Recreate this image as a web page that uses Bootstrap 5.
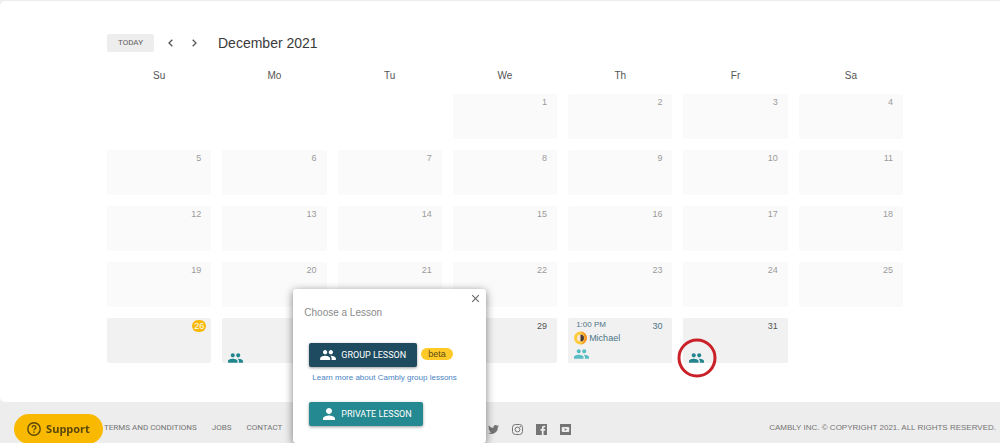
<!DOCTYPE html>
<html lang="en">
<head>
<meta charset="utf-8">
<meta name="viewport" content="width=device-width, initial-scale=1">
<title>Cambly – Lesson calendar</title>
<link href="https://cdn.jsdelivr.net/npm/bootstrap@5.3.0/dist/css/bootstrap.min.css" rel="stylesheet">
<script src="https://cdn.jsdelivr.net/npm/bootstrap@5.3.0/dist/js/bootstrap.bundle.min.js" defer></script>
<style>
  body { font-family: "Liberation Sans", Arial, sans-serif; background: #ededed; color: #424242; font-size: 9px; line-height: 12px; overflow-x: hidden; }
  .panel { margin-top: 1px; background: #fff; border-radius: 5px 0 0 5px; padding: 33px 97px 28px 107px; }
  .btn-today { --bs-btn-font-size: 8px; --bs-btn-padding-y: 0; --bs-btn-padding-x: 10px; --bs-btn-bg: #ededed; --bs-btn-color: #616161; --bs-btn-border-color: #ededed; --bs-btn-border-radius: 2px; height: 18px; line-height: 16px; font-family: Roboto, sans-serif; }
  .btn-step { --bs-btn-padding-x: 0; --bs-btn-padding-y: 0; width: 24px; height: 18px; line-height: 1; color: #555; }
  .month-title { font-size: 14px; line-height: 18px; font-weight: 400; color: #3a3a3a; }
  .calendar { width: calc(100% + 22px); margin: 6px -11px 0; table-layout: fixed; border-collapse: separate; border-spacing: 11px; }
  .calendar th { font-size: 10px; line-height: 14px; font-weight: 400; text-align: center; padding: 0; color: #555; }
  .calendar td { height: 45px; padding: 0; border-radius: 2px; background: #fafafa; color: #9a9a9a; vertical-align: top; position: relative; }
  .calendar td.blank { background: none; }
  .calendar td.open { background: #f1f1f1; color: #555; }
  .day-num { display: block; text-align: right; padding: 2px 10px 0 0; }
  .open .day-num.booked { color: #4c7485; }
  .today-dot { display: block; width: 14px; height: 12px; border-radius: 6px; margin: 2px 5px 0 auto; background: #f8b90a; color: #fff; text-align: center; }
  .group-mark { position: absolute; left: 6px; bottom: 0; line-height: 0; color: #22868f; }
  .event { position: absolute; left: 6px; top: 1px; color: #4c7485; }
  .event-time { font-size: 8px; margin-left: 2px; }
  .event-face { margin-right: 2px; }
  .ring { position: absolute; left: 50%; top: 50%; width: 39px; height: 39px; border: 3px solid #ca2027; border-radius: 50%; transform: translate(-50%, -50%); }
  .lesson-menu { position: absolute; z-index: 10; left: 71px; top: -29px; width: 193px; height: 154px; background: #fff; border-radius: 3px; box-shadow: 0 2px 8px rgba(0,0,0,.5); padding: 17px 11px 0; color: #8a8a8a; }
  .lesson-menu h2 { font-size: 10px; line-height: 14px; margin: 0 0 23px; font-weight: 400; }
  .lesson-row { margin-left: 5px; }
  .menu-close { position: absolute; top: 5px; right: 6px; border: 0; background: none; padding: 0; line-height: 0; color: #666; }
  .btn-lesson { --bs-btn-font-size: 9px; --bs-btn-padding-y: 0; --bs-btn-padding-x: 11px; --bs-btn-color: #fff; --bs-btn-hover-color: #fff; --bs-btn-border-width: 0; --bs-btn-border-radius: 2px; height: 24px; line-height: 24px; font-family: Roboto, sans-serif; box-shadow: 0 1px 3px rgba(0,0,0,.4); }
  .btn-group-lesson { --bs-btn-bg: #1e4b5f; --bs-btn-hover-bg: #1e4b5f; }
  .btn-private-lesson { --bs-btn-bg: #248990; --bs-btn-hover-bg: #248990; margin-top: 18px; }
  .icon-slot { width: 17px; }
  .beta-tag { background: #ffca28; color: #5d4b16; border-radius: 6px; padding: 0 7px; margin-bottom: 2px; }
  .learn-more { color: #4a84c4; font-size: 8px; text-decoration: none; }
  .site-footer { height: 41px; padding: 20px 4px 0 104px; font: 8px/12px Roboto, sans-serif; color: #757575; }
  .site-footer a { color: inherit; text-decoration: none; }
  .footer-links { flex: 0 0 43%; column-gap: 15px; }
  .social { column-gap: 13px; }
  .social svg { display: block; color: #757575; margin-top: 2px; }
  .copyright { font-family: "Liberation Sans", Arial, sans-serif; }
  .support { position: fixed; left: 14px; bottom: -1px; height: 30px; width: 89px; border: 0; border-radius: 15px; background: #f8b900; color: #5a470a; font: bold 11px/30px "Open Sans", sans-serif; z-index: 5; padding: 0; }
</style>
</head>
<body>
<svg class="d-none" aria-hidden="true">
  <symbol id="people" viewBox="1 5 22 14"><path fill="currentColor" d="M16 11c1.660 0 2.990-1.340 2.990-3S17.660 5 16 5s-3 1.340-3 3 1.340 3 3 3zm-8 0c1.660 0 2.990-1.340 2.990-3S9.660 5 8 5 5 6.340 5 8s1.340 3 3 3zm0 2c-2.330 0-7 1.170-7 3.500V19h14v-2.500c0-2.330-4.670-3.500-7-3.500zm8 0c-.29 0-.62.02-.97.05 1.160.84 1.970 1.970 1.970 3.450V19h6v-2.500c0-2.330-4.670-3.500-7-3.500z"/></symbol>
</svg>

<main class="panel">
  <div class="d-flex align-items-center">
    <button type="button" class="btn btn-today">TODAY</button>
    <button type="button" class="btn btn-step border-0 ms-1 d-flex align-items-center justify-content-center" aria-label="Previous month"><svg width="5" height="8" viewBox="0 0 5 8" fill="none" stroke="currentColor" stroke-width="1.300"><path d="M4.300.7 1 4l3.300 3.300"/></svg></button>
    <button type="button" class="btn btn-step border-0 d-flex align-items-center justify-content-center" aria-label="Next month"><svg width="5" height="8" viewBox="0 0 5 8" fill="none" stroke="currentColor" stroke-width="1.300"><path d="M.7.7 4 4 .7 7.300"/></svg></button>
    <h1 class="month-title mb-0 ms-2 ps-1">December 2021</h1>
  </div>

  <table class="calendar">
    <thead>
      <tr><th scope="col">Su</th><th scope="col">Mo</th><th scope="col">Tu</th><th scope="col">We</th><th scope="col">Th</th><th scope="col">Fr</th><th scope="col">Sa</th></tr>
    </thead>
    <tbody>
      <tr><td class="blank"></td><td class="blank"></td><td class="blank"></td><td><span class="day-num">1</span></td><td><span class="day-num">2</span></td><td><span class="day-num">3</span></td><td><span class="day-num">4</span></td></tr>
      <tr><td><span class="day-num">5</span></td><td><span class="day-num">6</span></td><td><span class="day-num">7</span></td><td><span class="day-num">8</span></td><td><span class="day-num">9</span></td><td><span class="day-num">10</span></td><td><span class="day-num">11</span></td></tr>
      <tr><td><span class="day-num">12</span></td><td><span class="day-num">13</span></td><td><span class="day-num">14</span></td><td><span class="day-num">15</span></td><td><span class="day-num">16</span></td><td><span class="day-num">17</span></td><td><span class="day-num">18</span></td></tr>
      <tr><td><span class="day-num">19</span></td><td><span class="day-num">20</span></td><td><span class="day-num">21</span></td><td><span class="day-num">22</span></td><td><span class="day-num">23</span></td><td><span class="day-num">24</span></td><td><span class="day-num">25</span></td></tr>
      <tr>
        <td class="open"><span class="today-dot">26</span></td>
        <td class="open">
          <span class="group-mark"><svg width="15" height="10"><use href="#people"/></svg></span>
          <div class="lesson-menu" role="dialog" aria-labelledby="menu-title">
            <button type="button" class="menu-close" aria-label="Close"><svg width="9" height="9" viewBox="0 0 9 9" stroke="currentColor" stroke-width="1.100"><path d="M1.200 1.200l6.600 6.600M7.800 1.200l-6.600 6.600"/></svg></button>
            <h2 id="menu-title">Choose a Lesson</h2>
            <div class="lesson-row d-flex align-items-center">
              <button type="button" class="btn btn-lesson btn-group-lesson d-flex align-items-center"><span class="icon-slot d-flex me-1"><svg width="16" height="10"><use href="#people"/></svg></span>GROUP LESSON</button>
              <span class="beta-tag ms-1">beta</span>
            </div>
            <div class="ms-2 mt-1"><a class="learn-more" href="#">Learn more about Cambly group lessons</a></div>
            <div class="lesson-row d-flex">
              <button type="button" class="btn btn-lesson btn-private-lesson d-flex align-items-center"><span class="icon-slot d-flex justify-content-center me-1"><svg width="12" height="12" viewBox="4 4 16 16"><path fill="currentColor" d="M12 12c2.210 0 4-1.790 4-4s-1.790-4-4-4-4 1.790-4 4 1.790 4 4 4zm0 2c-2.670 0-8 1.340-8 4v2h16v-2c0-2.660-5.330-4-8-4z"/></svg></span>PRIVATE LESSON</button>
            </div>
          </div>
        </td>
        <td class="open"><span class="day-num">28</span></td>
        <td class="open"><span class="day-num">29</span></td>
        <td class="open">
          <span class="day-num booked">30</span>
          <div class="event">
            <div class="event-time">1:00 PM</div>
            <div class="d-flex align-items-center"><svg class="event-face" width="13" height="14" viewBox="0 0 13 14"><circle cx="6.500" cy="7" r="6.500" fill="#ffca3a"/><path d="M6.500.5a6.500 6.500 0 0 1 0 13c2-1 4-3 4-6.500s-2-5.500-4-6.500z" fill="#f5962a"/><circle cx="6.500" cy="7" r="3.500" fill="#f6e6d6"/><path d="M6.500 3.500a3.500 3.500 0 0 1 0 7z" fill="#4a3a30"/></svg><span>Michael</span></div>
            <svg class="d-block mt-1" width="15" height="10" color="#58bcc4"><use href="#people"/></svg>
          </div>
        </td>
        <td class="open"><span class="day-num">31</span><span class="group-mark"><svg width="15" height="10"><use href="#people"/></svg><span class="ring"></span></span></td>
        <td class="blank"></td>
      </tr>
    </tbody>
  </table>
</main>

<footer class="site-footer d-flex align-items-start">
  <nav class="footer-links d-flex"><a href="#">TERMS AND CONDITIONS</a><a href="#">JOBS</a><a href="#">CONTACT</a></nav>
  <div class="social d-flex">
    <a href="#" aria-label="Twitter"><svg width="11" height="11" viewBox="0 0 24 24" fill="currentColor"><path d="M24 4.600c-.9.400-1.800.7-2.800.8 1-.6 1.800-1.600 2.200-2.700-1 .6-2 1-3.100 1.200A4.900 4.900 0 0 0 11.900 8.400C7.800 8.200 4.200 6.300 1.700 3.200.4 5.400 1 8.300 3.200 9.700c-.8 0-1.600-.2-2.200-.6 0 2.300 1.600 4.400 3.900 4.900-.7.200-1.500.2-2.200.1.600 2 2.400 3.400 4.600 3.400A9.900 9.900 0 0 1 0 19.500 14 14 0 0 0 21.500 7c1-.7 1.800-1.500 2.500-2.400z"/></svg></a>
    <a href="#" aria-label="Instagram"><svg width="11" height="11" viewBox="0 0 22 22" fill="none" stroke="currentColor" stroke-width="2"><rect x="1" y="1" width="20" height="20" rx="6"/><circle cx="11" cy="11" r="4.800"/><circle cx="16.500" cy="5.500" r=".6"/></svg></a>
    <a href="#" aria-label="Facebook"><svg width="11" height="11" viewBox="0 0 22 22" fill="currentColor"><path d="M0 0h22v22h-6.800v-8.500H18l.5-3.300h-3.300V8.100c0-1 .5-1.700 1.700-1.700h1.700V3.500h-2.500c-2.900 0-4.400 1.800-4.400 4.400v2.300H9v3.300h2.700V22H0z"/></svg></a>
    <a href="#" aria-label="YouTube"><svg width="11" height="11" viewBox="0 0 22 22" fill="currentColor" fill-rule="evenodd"><path d="M0 0h22v22H0zM5.500 6a2 2 0 0 0-2 2v6a2 2 0 0 0 2 2h11a2 2 0 0 0 2-2V8a2 2 0 0 0-2-2zM9.500 8.500l4.500 2.500-4.500 2.500z"/></svg></a>
  </div>
  <div class="copyright ms-auto text-nowrap">CAMBLY INC. © COPYRIGHT 2021. ALL RIGHTS RESERVED.</div>
</footer>

<button type="button" class="support d-flex align-items-center justify-content-center"><svg class="me-1" width="15" height="14" viewBox="0 0 15 14" fill="none" stroke="currentColor" stroke-width="1.400"><circle cx="7" cy="7" r="6.200"/><path d="M5.200 5.500a1.800 1.800 0 1 1 2.700 1.500c-.6.400-.9.700-.9 1.300"/><path d="M7 9.400v1.400"/></svg>Support</button>
</body>
</html>
